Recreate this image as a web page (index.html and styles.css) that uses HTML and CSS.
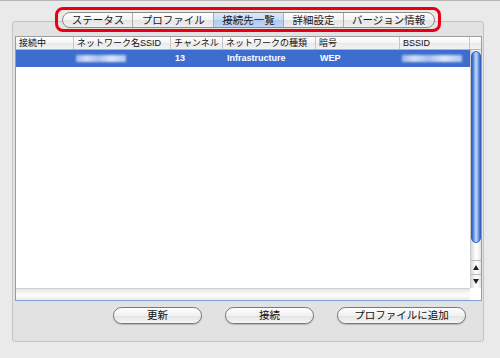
FILE: index.html
```html
<!DOCTYPE html>
<html lang="ja">
<head>
    <meta charset="UTF-8">
    <title>接続先一覧</title>
    <link rel="stylesheet" href="styles.css">
</head>
<body>
    <div class="window">
        <div class="tabs-row">
            <div class="tabs-ring">
                <div class="tabs">
                    <span class="tab">ステータス</span>
                    <span class="tab">プロファイル</span>
                    <span class="tab active">接続先一覧</span>
                    <span class="tab">詳細設定</span>
                    <span class="tab">バージョン情報</span>
                </div>
            </div>
        </div>

        <div class="panel">
            <div class="table">
                <div class="thead">
                    <div class="th">接続中</div>
                    <div class="th">ネットワーク名SSID</div>
                    <div class="th">チャンネル</div>
                    <div class="th">ネットワークの種類</div>
                    <div class="th">暗号</div>
                    <div class="th">BSSID</div>
                    <div class="th th-corner"></div>
                </div>
                <div class="tbody">
                    <div class="rows">
                        <div class="row selected">
                            <div class="td"></div>
                            <div class="td"><span class="blur blur-ssid"></span></div>
                            <div class="td">13</div>
                            <div class="td">Infrastructure</div>
                            <div class="td">WEP</div>
                            <div class="td"><span class="blur blur-bssid"></span></div>
                        </div>
                    </div>
                    <div class="vscroll">
                        <div class="thumb"></div>
                        <div class="track"></div>
                        <div class="arrow arrow-up"></div>
                        <div class="arrow arrow-down"></div>
                    </div>
                </div>
                <div class="hbar">
                    <div class="hscroll"></div>
                    <div class="corner"></div>
                </div>
            </div>

            <div class="buttons">
                <button class="btn btn-sm">更新</button>
                <button class="btn btn-sm">接続</button>
                <button class="btn btn-lg">プロファイルに追加</button>
            </div>
        </div>
    </div>
</body>
</html>
```

FILE: styles.css
```css
body {
    margin: 0;
    height: 358px;
    box-sizing: border-box;
    overflow: hidden;
    background-color: #eaeaea;
    border-top: 1px solid #b4b4b4;
    font-family: "Liberation Sans", "Noto Sans CJK JP", sans-serif;
    color: #1a1a1a;
}
.window {
    padding: 6px 16px 0 12px;
}

/* pestañas */
.tabs-row {
    display: flex;
    justify-content: center;
    position: relative;
    z-index: 1;
}
.tabs-ring {
    display: flex;
    border: 3px solid #e60012;
    border-radius: 8px;
    padding: 2px 3px 1px 4px;
}
.tabs {
    display: flex;
    height: 16px;
    box-sizing: border-box;
    border: 1px solid #8a8a8a;
    border-radius: 8px;
    overflow: hidden;
    background: linear-gradient(#fefefe, #f3f3f3 50%, #e4e4e4 51%, #efefef);
}
.tab {
    padding: 0 8.3px;
    font-size: 10.5px;
    line-height: 14px;
    white-space: nowrap;
    border-left: 1px solid #ababab;
}
.tab:first-child {
    border-left: none;
}
.tab.active {
    background: linear-gradient(#dce9fa, #c6dbf5 50%, #aecbef 51%, #c0d7f4);
}

/* panel */
.panel {
    margin-top: -11px;
    height: 321px;
    box-sizing: border-box;
    border: 1px solid #c4c4c4;
    border-radius: 3px;
    background-color: #e2e2e2;
    padding: 14px 1px 0 2px;
    display: flex;
    flex-direction: column;
}
.table {
    height: 265px;
    box-sizing: border-box;
    border: 1px solid #7d9fd7;
    border-top-color: #9c9c9c;
    background-color: white;
    display: flex;
    flex-direction: column;
}
.thead {
    display: grid;
    grid-template-columns: 58px 97px 52px 93px 84px 70px 1fr;
    height: 13px;
    box-sizing: border-box;
    border-bottom: 1px solid #b3b3b3;
    background: linear-gradient(#ffffff, #f4f4f4 50%, #e9e9e9 51%, #f3f3f3);
}
.th {
    font-size: 9px;
    line-height: 12px;
    padding-left: 3px;
    white-space: nowrap;
    overflow: hidden;
    color: #111;
    border-right: 1px solid #c6c6c6;
}
.th-corner {
    border-right: none;
}
.tbody {
    flex: 1;
    display: grid;
    grid-template-columns: 1fr 11px;
}
.row {
    display: grid;
    grid-template-columns: 58px 97px 52px 93px 84px 70px;
    height: 17px;
    font-size: 9px;
    line-height: 17px;
}
.row.selected {
    background-color: #3d6ecf;
    color: white;
    font-weight: bold;
}
.td {
    padding-left: 4px;
    white-space: nowrap;
}
.blur {
    display: inline-block;
    height: 7px;
    vertical-align: -1px;
    background: linear-gradient(90deg, #9fb7ea, #d3def6 20%, #aac0ee 45%, #dfe7f8 70%, #b2c6ef);
    filter: blur(1px);
}
.blur-ssid {
    width: 50px;
    margin-left: -2px;
}
.blur-bssid {
    width: 60px;
    margin-left: -2px;
}

/* barras de desplazamiento */
.vscroll {
    display: flex;
    flex-direction: column;
    border-left: 1px solid #cacaca;
    background: linear-gradient(90deg, #d9d9d9, #f8f8f8 40%, #ffffff 60%, #e2e2e2);
}
.thumb {
    margin-top: 1px;
    height: 192px;
    box-sizing: border-box;
    border: 1px solid #3160c0;
    border-radius: 5px;
    background: linear-gradient(90deg, #2f5fc6, #7ea8ea 30%, #c4dafa 50%, #8cb2ee 70%, #3a69cb);
}
.track {
    flex: 1;
}
.arrow {
    height: 13px;
    border-top: 1px solid #b9b9b9;
    display: flex;
    align-items: center;
    justify-content: center;
}
.arrow-up::before {
    content: "";
    border-left: 3px solid transparent;
    border-right: 3px solid transparent;
    border-bottom: 5px solid #222;
}
.arrow-down::before {
    content: "";
    border-left: 3px solid transparent;
    border-right: 3px solid transparent;
    border-top: 5px solid #222;
}
.hbar {
    height: 12px;
    display: grid;
    grid-template-columns: 1fr 11px;
}
.hscroll {
    border-top: 1px solid #d0d0d0;
    background: linear-gradient(#e6e6e6, #f7f7f7 35%, #ffffff 55%, #ececec);
}
.corner {
    background-color: white;
}

/* botones */
.buttons {
    display: flex;
    justify-content: flex-end;
    gap: 23px;
    padding-right: 16px;
    margin-top: 6px;
}
.btn {
    height: 17px;
    box-sizing: border-box;
    padding: 0;
    border: 1px solid #787878;
    border-radius: 9px;
    background: linear-gradient(#fdfdfd, #f2f2f2 50%, #e3e3e3 51%, #f6f6f6);
    box-shadow: 0 1px 1px rgba(0, 0, 0, 0.2);
    font-family: inherit;
    font-size: 10.5px;
    line-height: 15px;
    color: #111;
    text-align: center;
}
.btn-sm {
    width: 89px;
}
.btn-lg {
    width: 129px;
}
```
